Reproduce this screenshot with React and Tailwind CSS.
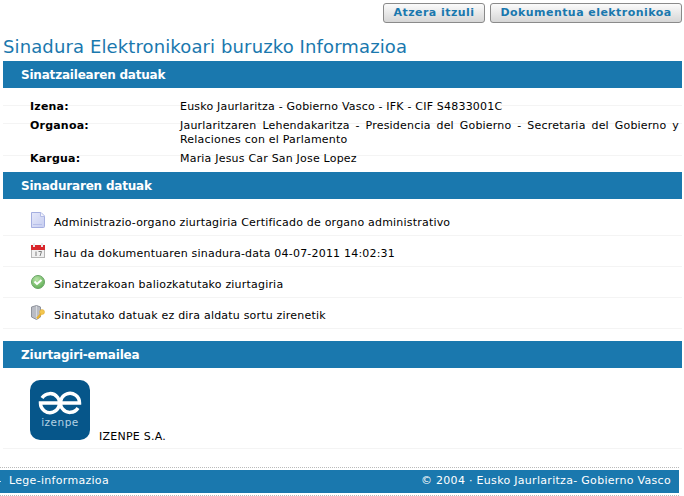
function DocIcon() {
  return (
    <svg width="16" height="16" viewBox="0 0 16 16" className="shrink-0">
      <defs>
        <linearGradient id="docFill" x1="0" y1="0" x2="1" y2="1">
          <stop offset="0" stopColor="#e6e9fa" />
          <stop offset="1" stopColor="#c6cdf0" />
        </linearGradient>
      </defs>
      <path d="M1.500 0.500h9.500l3.500 3.500v10.500a1 1 0 0 1-1 1h-12z" fill="url(#docFill)" stroke="#a4aee0" />
      <path d="M10.500 0.500v4h4" fill="#f2f3fc" stroke="#b4bce6" />
      <path d="M3 12.500h9" stroke="#b6bfe9" />
    </svg>
  );
}

function CalendarIcon() {
  return (
    <svg width="16" height="16" viewBox="0 0 16 16" className="shrink-0">
      <rect x="1.500" y="2.500" width="13" height="12" fill="#f0f0f0" stroke="#b4b4b4" />
      <rect x="1" y="2" width="14" height="5" fill="#d9262c" />
      <rect x="3" y="0" width="2" height="4" fill="#e8e8e8" />
      <rect x="11" y="0" width="2" height="4" fill="#e8e8e8" />
      <path d="M6 8.500v4.500M8.500 8.500h3l-1.500 4.500" stroke="#808080" fill="none" />
    </svg>
  );
}

function CheckIcon() {
  return (
    <svg width="16" height="16" viewBox="0 0 16 16" className="shrink-0">
      <defs>
        <radialGradient id="checkFill" cx="0.4" cy="0.3" r="0.8">
          <stop offset="0" stopColor="#b7e3a6" />
          <stop offset="1" stopColor="#58a94e" />
        </radialGradient>
      </defs>
      <circle cx="8" cy="8" r="6.500" fill="url(#checkFill)" stroke="#6aa566" />
      <path d="M4.500 7.500l2.500 2.500 4.500-4" stroke="#fff" strokeWidth="2" fill="none" />
    </svg>
  );
}

function KeyIcon() {
  return (
    <svg width="16" height="16" viewBox="0 0 16 16" className="shrink-0">
      <path d="M1.500 2l5-1.500 4 1.500v10l-4 2.500-5-2.500z" fill="#b9bcc4" stroke="#8f939c" />
      <path d="M6.500 1v13" stroke="#d8dade" />
      <circle cx="12" cy="7" r="2.500" fill="#f3c64e" stroke="#d9a632" strokeWidth="0.5" />
      <path d="M11 9l-4 4.500" stroke="#e8b130" strokeWidth="2" />
    </svg>
  );
}

function IzenpeLogo() {
  return (
    <svg width="60" height="60" viewBox="0 0 60 60" className="shrink-0">
      <rect width="60" height="60" rx="10" fill="#06568a" />
      <path d="M12 18A9.500 9.500 0 1 1 10.500 23H49.500A9.500 9.500 0 1 0 48 28" fill="none" stroke="#fff" strokeWidth="3.500" />
      <text x="30" y="46" textAnchor="middle" fontSize="10.500" letterSpacing="0.500" fill="#b4d2e4" fontFamily="DejaVu Sans, sans-serif">izenpe</text>
    </svg>
  );
}

function SectionHeader({ children }) {
  return (
    <h2 className="ml-[3px] mr-[2px] h-[27px] bg-[#1a78ae] pl-[18px] text-[12px] leading-[28px] font-bold tracking-[-0.2px] text-white">
      {children}
    </h2>
  );
}

function DataRow({ label, offset, children }) {
  return (
    <div className="ml-[3px] mr-[2px] flex border-t border-[#f4f4f4] pr-[3px] pl-[27px] text-[11px] leading-[14px] tracking-[0.2px] text-black">
      <div className={`flex w-full ${offset}`}>
        <div className="w-[150px] shrink-0 font-bold">{label}</div>
        <div className="flex-1 text-justify">{children}</div>
      </div>
    </div>
  );
}

function InfoRow({ icon, children }) {
  return (
    <div className="ml-[3px] mr-[2px] flex h-[31px] items-end gap-[8px] border-b border-[#f4f4f4] pb-[5px] pl-[27px] text-[11px] leading-[14px] tracking-[0.2px] text-black">
      <div className="self-start pt-[7px]">{icon}</div>
      <span>{children}</span>
    </div>
  );
}

function Button({ w, children }) {
  return (
    <button
      type="button"
      className={`h-[20px] rounded-[3px] border border-[#8a8a8a] bg-gradient-to-b from-[#fbfbfb] to-[#d6d6d6] text-[11px] leading-[18px] font-bold tracking-[0.45px] text-[#1a78ae] ${w}`}
    >
      {children}
    </button>
  );
}

export default function App() {
  return (
    <div className="h-[496px] w-[684px] overflow-hidden bg-white font-['DejaVu_Sans',Verdana,sans-serif]">
      <div className="flex justify-end gap-[5px] pt-[3px] pr-[2px]">
        <Button w="w-[102px]">Atzera itzuli</Button>
        <Button w="w-[192px]">Dokumentua elektronikoa</Button>
      </div>

      <h1 className="mt-[13px] ml-[3px] h-[25px] text-[18px] leading-[22px] font-normal tracking-[0.12px] text-[#1a78ae]">
        Sinadura Elektronikoari buruzko Informazioa
      </h1>

      <SectionHeader>Sinatzailearen datuak</SectionHeader>
      <div className="flex flex-col gap-[9px] pt-[17px] pb-[8px]">
        <DataRow label="Izena:" offset="-mt-[6px]">Eusko Jaurlaritza - Gobierno Vasco - IFK - CIF S4833001C</DataRow>
        <DataRow label="Organoa:" offset="-mt-[5px] -mb-[1px]">
          Jaurlaritzaren Lehendakaritza - Presidencia del Gobierno - Secretaria del Gobierno y Relaciones con el Parlamento
        </DataRow>
        <DataRow label="Kargua:" offset="-mt-[4px] -mb-[2px]">Maria Jesus Car San Jose Lopez</DataRow>
      </div>

      <SectionHeader>Sinaduraren datuak</SectionHeader>
      <div className="pt-[6px]">
        <InfoRow icon={<DocIcon />}>Administrazio-organo ziurtagiria Certificado de organo administrativo</InfoRow>
        <InfoRow icon={<CalendarIcon />}>Hau da dokumentuaren sinadura-data 04-07-2011 14:02:31</InfoRow>
        <InfoRow icon={<CheckIcon />}>Sinatzerakoan baliozkatutako ziurtagiria</InfoRow>
        <InfoRow icon={<KeyIcon />}>Sinatutako datuak ez dira aldatu sortu zirenetik</InfoRow>
      </div>

      <div className="mt-[12px]">
        <SectionHeader>Ziurtagiri-emailea</SectionHeader>
      </div>
      <div className="ml-[3px] mr-[2px] flex h-[81px] items-end gap-[9px] border-b border-[#f4f4f4] pb-[8px] pl-[27px] text-[11px] leading-[14px] tracking-[0.25px] text-black">
        <IzenpeLogo />
        <span className="-mb-[4px]">IZENPE S.A.</span>
      </div>

      <div className="mt-[18px] mr-[5px] h-[29px] border-y border-dotted border-[#bbb] py-[2px] text-[11px] tracking-[0.3px] text-white">
        <div className="flex h-full items-center justify-between bg-[#1a78ae] pr-[8px]">
          <span className="flex items-center">
            <span className="mr-[8px] h-px w-px bg-[#cfe3ef]" />
            Lege-informazioa
          </span>
          <span>© 2004 · Eusko Jaurlaritza- Gobierno Vasco</span>
        </div>
      </div>
    </div>
  );
}
